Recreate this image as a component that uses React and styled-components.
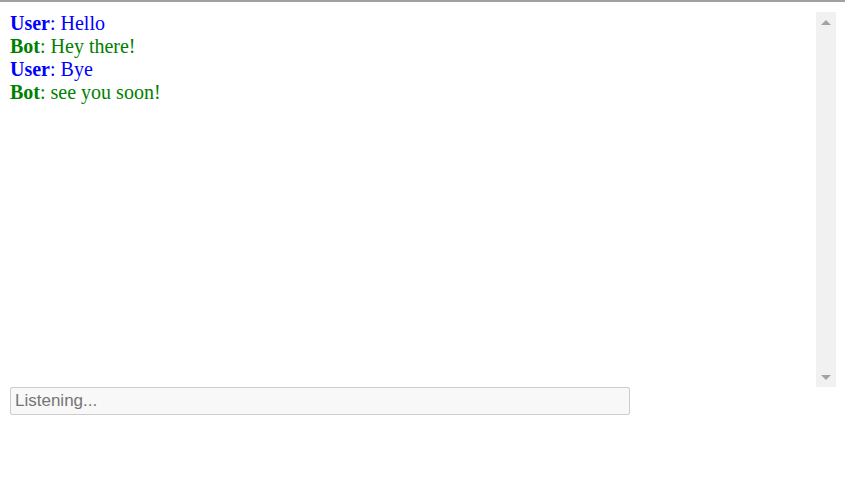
import React from "react";
import styled, { createGlobalStyle } from "styled-components";

const messages = [
  { from: "User", text: "Hello" },
  { from: "Bot", text: "Hey there!" },
  { from: "User", text: "Bye" },
  { from: "Bot", text: "see you soon!" },
];

const App = () => {
  return (
    <>
      <GlobalStyle />
      <Page>
        <ChatFrame>
          <ChatLog>
            {messages.map((m, i) => (
              <Line key={i} $bot={m.from === "Bot"}>
                <b>{m.from}</b>: {m.text}
              </Line>
            ))}
          </ChatLog>
          <ScrollRail>
            <Arrow $dir="up" />
            <Arrow $dir="down" />
          </ScrollRail>
        </ChatFrame>
        <SpeechInput placeholder="Listening..." readOnly />
      </Page>
    </>
  );
};

const GlobalStyle = createGlobalStyle`
  body {
    margin: 0;
    background: #fff;
    font-family: "Liberation Serif", "Times New Roman", serif;
  }
`;

const Page = styled.div`
  border-top: 2px solid #a0a0a0;
  padding: 10px 9px 10px 10px;
  display: flex;
  flex-direction: column;
  align-items: flex-start;
`;

const ChatFrame = styled.div`
  display: flex;
  width: 100%;
  height: 375px;
`;

const ChatLog = styled.div`
  flex: 1;
  overflow-y: auto;
  font-size: 20px;
  line-height: 23px;
`;

const ScrollRail = styled.div`
  width: 20px;
  background: #f1f1f1;
  display: flex;
  flex-direction: column;
  justify-content: space-between;
  align-items: center;
  padding: 8px 0 7px;
  box-sizing: border-box;
`;

const Arrow = styled.span`
  width: 0;
  height: 0;
  border-left: 5px solid transparent;
  border-right: 5px solid transparent;
  ${(p) =>
    p.$dir === "up"
      ? "border-bottom: 5px solid #a3a3a3;"
      : "border-top: 5px solid #a3a3a3;"}
`;

const Line = styled.div`
  color: ${(p) => (p.$bot ? "#008000" : "#0000ff")};
`;

const SpeechInput = styled.input`
  box-sizing: border-box;
  width: 620px;
  height: 28px;
  padding: 0 4px;
  background: #f8f8f8;
  border: 1px solid #cccccc;
  border-radius: 2px;
  font-family: "Liberation Sans", Arial, sans-serif;
  font-size: 17px;
  outline: none;

  &::placeholder {
    color: #757575;
  }
`;

export default App;
